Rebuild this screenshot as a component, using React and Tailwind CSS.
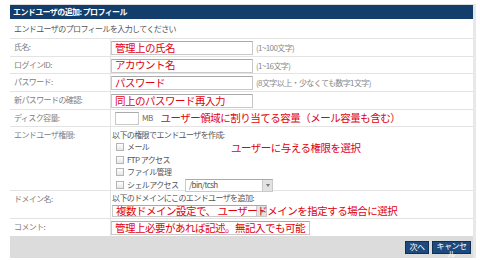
import React from 'react';

const jp = { fontFamily: '"Noto Sans CJK JP", "Noto Sans", sans-serif' };
const small = 'text-[8px] leading-none tracking-[-0.6px] text-[#555]';
const red = 'text-[10.5px] leading-none text-[#e00010] tracking-[-0.5px] whitespace-nowrap';
const box = 'border border-[#c9c9c9] border-t-[#a9a9a9] bg-white';

const Row = ({ label, h, children }) => (
  <div className={`flex border-t border-[#e3e3e3] ${h}`}>
    <div className={`w-[101px] shrink-0 border-r border-[#e3e3e3] pl-[4px] pt-[4px] ${small} text-[#808080]`}>
      {label}
    </div>
    <div className="flex-1 min-w-0">{children}</div>
  </div>
);

const TextBox = ({ w, value, hint }) => (
  <div className="flex items-center h-full pt-[1px]">
    <div className={`${box} ${w} h-[14px] flex items-center pl-[3px]`}>
      <span className={red}>{value}</span>
    </div>
    {hint && <span className={small + ' ml-[3px] text-[#888]'}>{hint}</span>}
  </div>
);

const Check = ({ children }) => (
  <div className="flex items-center h-[12.5px]">
    <span className="w-[8px] h-[8px] border border-[#b5b5b5] bg-gradient-to-b from-white to-[#e6e6e6] mr-[3px]" />
    <span className={small + ' text-[#444]'}>{children}</span>
  </div>
);

const Arrow = () => (
  <span className="absolute right-0 top-0 h-full w-[10px] bg-[#e2e2e2] border-l border-[#c8c8c8] flex items-center justify-center">
    <span className="w-0 h-0 border-l-[2.5px] border-r-[2.5px] border-t-[3px] border-l-transparent border-r-transparent border-t-[#777]" />
  </span>
);

export default function App() {
  return (
    <div className="w-[480px] h-[260px] bg-white leading-none text-[8px]" style={jp}>
      <div className="ml-[10px] pt-[4px]">
        <div className="w-[466px] border-t border-[#dcdcdc] border-r-[3px] border-r-[#e8e8e8]">
          <div className="h-[14px] bg-[#133d6b] flex items-center pl-[3px]">
            <span className="text-[8px] font-bold text-white leading-none tracking-[-0.6px]">エンドユーザの追加: プロフィール</span>
          </div>
          <div className="h-[19px] flex items-center pl-[4px]">
            <span className={small + ' text-[#333]'}>エンドユーザのプロフィールを入力してください</span>
          </div>
          <Row label="氏名:" h="h-[18px]">
            <TextBox w="w-[142px]" value="管理上の氏名" hint="(1~100文字)" />
          </Row>
          <Row label="ログインID:" h="h-[17px]">
            <TextBox w="w-[142px]" value="アカウント名" hint="(1~16文字)" />
          </Row>
          <Row label="パスワード:" h="h-[18px]">
            <TextBox w="w-[142px]" value="パスワード" hint="(8文字以上・少なくても数字1文字)" />
          </Row>
          <Row label="新パスワードの確認:" h="h-[18px]">
            <TextBox w="w-[142px]" value="同上のパスワード再入力" />
          </Row>
          <Row label="ディスク容量:" h="h-[17px]">
            <div className="flex items-center h-full pl-[4px]">
              <div className={`${box} w-[24px] h-[13px]`} />
              <span className={small + ' ml-[3px] text-[#666]'}>MB</span>
              <span className={red + ' ml-[8px]'}>ユーザー領域に割り当てる容量（メール容量も含む）</span>
            </div>
          </Row>
          <Row label="エンドユーザ権限:" h="h-[64px]">
            <div className="pl-[1px] pt-[4px]">
              <div className={small + ' text-[#444]'}>以下の権限でエンドユーザを作成:</div>
              <div className="flex pl-[4px] mt-[2px]">
                <div className="w-[115px]">
                  <Check>メール</Check>
                  <Check>FTP アクセス</Check>
                  <Check>ファイル管理</Check>
                </div>
                <span className={red + ' mt-[2px]'}>ユーザーに与える権限を選択</span>
              </div>
              <div className="flex items-center pl-[4px]">
                <div className="w-[69px]">
                  <Check>シェルアクセス</Check>
                </div>
                <div className={`${box} relative w-[88px] h-[13px] flex items-center pl-[3px]`}>
                  <span className={small + ' text-[#444]'}>/bin/tcsh</span>
                  <Arrow />
                </div>
              </div>
            </div>
          </Row>
          <Row label="ドメイン名:" h="h-[28px]">
            <div className="pl-[1px] pt-[3px]">
              <div className={small + ' text-[#444]'}>以下のドメインにこのエンドユーザを追加:</div>
              <div className={`${box} relative w-[155px] h-[12px] mt-[3px]`}>
                <Arrow />
                <span className={red + ' absolute left-[3px] top-[0px] z-10'}>複数ドメイン設定で、 ユーザードメインを指定する場合に選択</span>
              </div>
            </div>
          </Row>
          <Row label="コメント:" h="h-[18px]">
            <TextBox w="w-[199px]" value="管理上必要があれば記述。無記入でも可能" />
          </Row>
          <div className="h-[22px] bg-[#dcdcdc] flex items-center justify-end gap-[3px] pr-[2px]">
            <button className="h-[13px] w-[24px] bg-[#1d4a7c] border border-[#0f2f55] text-white text-[8px] leading-none tracking-[-0.5px]">次へ</button>
            <button className="h-[13px] w-[39px] bg-[#1d4a7c] border border-[#0f2f55] text-white text-[8px] leading-none tracking-[-0.5px]">キャンセル</button>
          </div>
        </div>
      </div>
    </div>
  );
}
